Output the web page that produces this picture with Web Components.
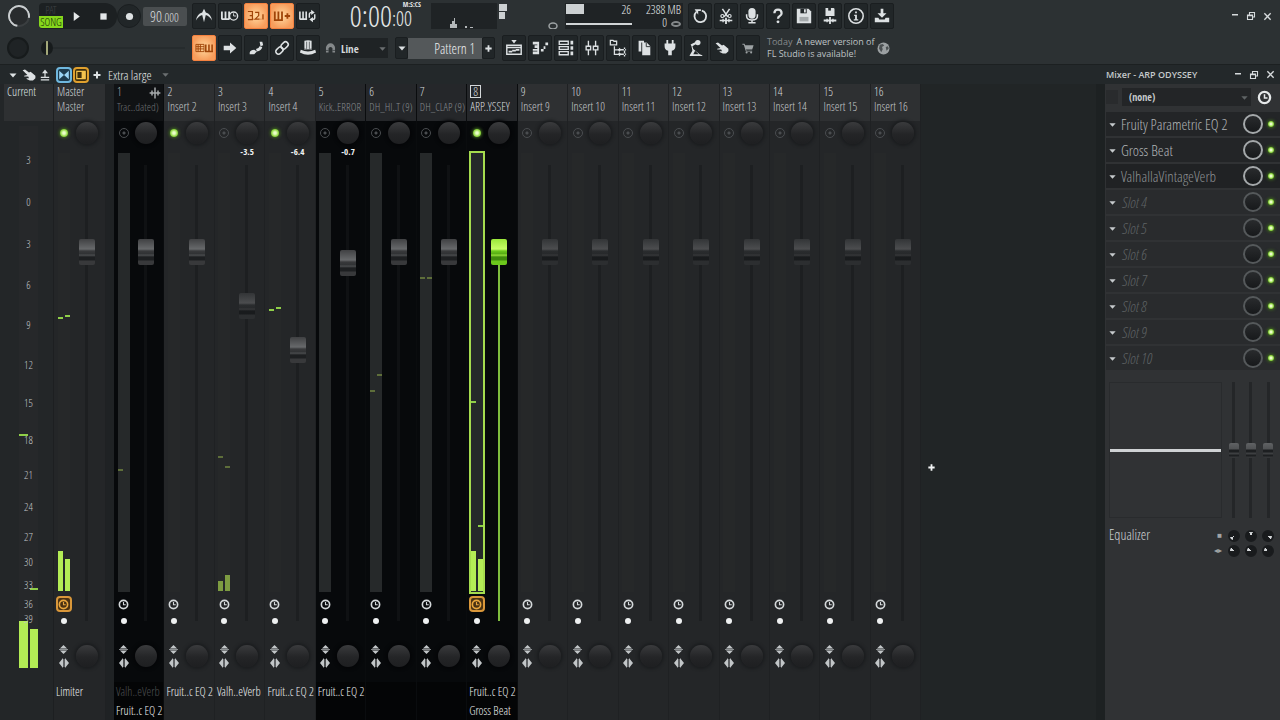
<!DOCTYPE html>
<html lang="en">
<head>
<meta charset="utf-8">
<title>Mixer - ARP ODYSSEY</title>
<style>
  html, body { margin: 0; height: 100%; }
  body { background: #222628; color: #d8dcde; font-family: "Open Sans Condensed Light", "Open Sans Condensed", "Liberation Sans Narrow", Lato, sans-serif; font-size: 12px; overflow: hidden; }
</style>
</head>
<body>
<daw-app></daw-app>
<script>
const ICONS = {
  metronome: '<path d="M1 15c1-5 3-8 7-9l2-4 2 4c4 1 6 4 7 9-2-3-4-5-7-6l-2 8-2-8c-3 1-5 3-7 6z"/>',
  waitkey: '<path d="M1 5v9M5 5v9M9 5v9M1 13.500h8" fill="none" stroke="currentColor" stroke-width="2"/><circle cx="14" cy="10" r="4.500" fill="none" stroke="currentColor" stroke-width="1.500"/><path d="M14 7v3h3" fill="none" stroke="currentColor"/>',
  countin: '<path d="M1 5h5v4.500H3M6 9.500V14H1M9 6h4v3.500l-4 4h5" fill="none" stroke="currentColor" stroke-width="1.300"/><path d="M17 8h1.500v6H17zM7 13h1v1H7zM15 13h1v1h-1z"/>',
  stepadd: '<path d="M2 5v10M6 5v10M10 5v10M1 14.500h10M13 10h6M16 7v6" fill="none" stroke="currentColor" stroke-width="2"/>',
  looprec: '<path d="M1 5v9M4.500 5v9M8 5v9M1 13.500h8" fill="none" stroke="currentColor" stroke-width="1.800"/><path d="M11.500 12V8q0-2 3-2M17.500 8v4q0 2-3 2" fill="none" stroke="currentColor" stroke-width="1.600"/><path d="M13.500 3l4 3-4 3zM15.500 11l-4 3 4 3z"/>',
  typing: '<path d="M1 6h9v8H1zM1 8.500h9M1 11h9M3.500 6v8M6 6v8" fill="none" stroke="currentColor"/><path d="M12 6v8M15.500 6v8M19 6v8M11 14h9" fill="none" stroke="currentColor" stroke-width="1.700"/>',
  arrow: '<path d="M3 7.500h7V4l7 6-7 6v-3.500H3z"/>',
  slide: '<path d="M3 15q1-3 5-3l3 2-3 3H3zM10 11q3 0 4-3l3 1q-1 4-6 5zM14 3h3l1 4-3 1z"/>',
  link: '<g fill="none" stroke="currentColor" stroke-width="1.700" transform="rotate(-45 10 10)"><rect x="1.500" y="7" width="9" height="6" rx="3"/><rect x="9.500" y="7" width="9" height="6" rx="3"/></g>',
  hat: '<path d="M6 2q4-1 8 0v10H6z"/><path d="M2 12q8 4 16 0l1 3q-9 5-18 0z"/><path d="M6 11q4 2 8 0M8.500 3v8M11.500 3v8" fill="none" stroke="#23282a" stroke-width="0.700"/>',
  magnet: '<path d="M3 16V9a7 7 0 0 1 14 0v7h-4V9.500q-3-4-6 0V16z"/><path d="M3 13h4M13 13h4" stroke="#2a2f31"/>',
  playlist: '<path d="M2 7h16v10H2zM2 9.500h16" fill="none" stroke="currentColor" stroke-width="1.600"/><path d="M7 1h6l-3 4zM4 13h4v2H4zM8 12h4v2H8zM12 11h4v2h-4z"/>',
  pianoroll: '<path d="M2 3h6v3H2zM4 7h5v3H4zM2 11h6v2H2zM2 14h6v3H2zM7 3h2v14H7zM11 11h3v3h-3zM14 8h2v3h-2zM16 4h3v3h-3z"/>',
  rack: '<path d="M2.500 2.500h10v3.500h-10zM2.500 8.500h10v3h-10zM2.500 14h10v3.500h-10z" fill="none" stroke="currentColor" stroke-width="1.500"/><path d="M15 2h3v4h-3zM15 8h3v4h-3zM15 14h3v4h-3z"/>',
  mixer: '<path d="M6 2v16M14 2v16" stroke="currentColor" stroke-width="1.500"/><path d="M3.500 8h5v4h-5zM11.500 8h5v4h-5z" fill="#23282a" stroke="currentColor" stroke-width="1.500"/>',
  browser: '<path d="M1.500 1.500h3l1 1h3v4h-7zM6 8v9h5M6 12h5" fill="none" stroke="currentColor" stroke-width="1.400"/><path d="M10 11.200h9v1.500h-9zM10 16.200h9v1.500h-9zM11 9.500l3 2.500-3 2.500zM18 9.500h-1.500v5H18zM11 14.500l3 2.500-3 2.500zM18 14.500h-1.500v5H18z"/>',
  copy: '<path d="M4 2h6v2H7v10H4zM8 4h5l4 4v10H8z"/><path d="M12.500 4v4.500H17" fill="none" stroke="#23282a"/>',
  plug: '<path d="M6 1h2v4h4V1h2v4h2v3q0 4-4 5v5H8v-5q-4-1-4-5V5h2z"/>',
  touch: '<circle cx="12" cy="4" r="3"/><path d="M10 3L4 6l1 2 1 5-3 5v1h14v-1l-3-1-7-6-1-3 5-3zM9 13l4 4H7z" fill-rule="evenodd"/>',
  hand: '<path d="M2 4l3-1 5 4 2-1 6 5v3l-3 3h-4l-4-2v-1h3l-1-2-5 0v-1l4-1z"/>',
  cart: '<path d="M2 4h3l1 2h12l-2 6H7l1 2h8v1H7L4 5.500H2z"/><circle cx="8" cy="16.500" r="1.500"/><circle cx="14.500" cy="16.500" r="1.500"/>',
  undo: '<path d="M6 5.500a6.500 6.500 0 1 0 6-1.500" fill="none" stroke="currentColor" stroke-width="2"/><path d="M4 2.500h7v2H8v4z"/>',
  cut: '<path d="M6 2l6 9M14 2l-6 9M3 15h14" fill="none" stroke="currentColor" stroke-width="1.700"/><circle cx="6" cy="10" r="1.700" fill="none" stroke="currentColor" stroke-width="1.300"/><circle cx="14" cy="10" r="1.700" fill="none" stroke="currentColor" stroke-width="1.300"/><path d="M9 12h2v7H9zM6 13h1.500v4H6zM12.500 13H14v4h-1.500z"/>',
  mic: '<rect x="6" y="1" width="8" height="12" rx="4"/><path d="M4 8v2q0 4.500 6 4.500t6-4.500V8M10 14v3M6 17.500h8" fill="none" stroke="currentColor" stroke-width="1.700"/>',
  help: '<path d="M6 7q0-4 4-4t4 4q0 2-2 3t-2 3" fill="none" stroke="currentColor" stroke-width="2.500"/><circle cx="10" cy="16.500" r="1.600"/>',
  save: '<path d="M2 2h13l3 3v13H2z"/><path d="M6 2h7v5H6z" fill="#23282a"/><path d="M10 2.500h2v3.500h-2z"/><path d="M5 11h10v5H5z" fill="#a5aaac"/>',
  savenew: '<path d="M5 1h9l1 1v8H5z"/><path d="M8 1h3v3H8z" fill="#23282a"/><path d="M3 14h14v2H3zM9 11h2v8H9zM6 13h1.500v4H6zM12.500 13H14v4h-1.500z"/>',
  info: '<circle cx="10" cy="10" r="8" fill="none" stroke="currentColor" stroke-width="1.700"/><path d="M8 8.500h3v5h1.500V15h-5v-1.500H9V10H8zM9 5h2v2H9z"/>',
  export: '<path d="M8.500 2h3v5H15l-5 5-5-5h3.500zM2 12h4l1 2h6l1-2h4v5H2z"/>',
  globe: '<circle cx="10" cy="10" r="8" fill="#9ba0a2"/><path d="M5 5l4-1 2 2-3 2 1 3-2 4-3-5zM13 8l3-1 1 3-3 3z" fill="#4a4f51"/>',
  clock: '<circle cx="10" cy="10" r="7.500" fill="none" stroke="currentColor" stroke-width="3"/><path d="M10 5.500v5h4" fill="none" stroke="currentColor" stroke-width="2"/>',
  down: '<path d="M3 7h14l-7 8z"/>',
  plus: '<path d="M8 3h4v5h5v4h-5v5H8v-5H3V8h5z"/>',
  sendup: '<path d="M10 1l5 6h-4v6h6v2H3v-2h6V7H5zM3 17h14v2H3z"/>',
  wave: '<path d="M1 10h18M5 6v8M10 1v18M15 6v8" stroke="currentColor" stroke-width="2.500"/>',
  bowtie: '<path d="M2 3l8 7-8 7zM18 3l-8 7 8 7z"/>',
  panel: '<path d="M3 4h14v12H3z" fill="none" stroke="currentColor" stroke-width="2"/><path d="M11 4h6v12h-6z"/>',
  phase: '<path d="M10 0l8 8H2zM2 12h16l-8 8z"/><path d="M0 10h20" stroke="currentColor" stroke-width="1.500"/>',
  swap: '<path d="M8 0v20L0 10zM12 0v20l8-10z"/><path d="M10 2v16" stroke="currentColor" stroke-width="1.500"/>',
  minimize: '<path d="M4 6h12v3H4z"/>',
  restore: '<path d="M7 7V3h10v9h-4M3 8h10v9H3z" fill="none" stroke="currentColor" stroke-width="2.200"/><path d="M3 8h10v2.500H3z"/>',
  close: '<path d="M3 3l14 14M17 3L3 17" stroke="currentColor" stroke-width="3"/>',
  play: '<path d="M5 2l11 8-11 8z"/>',
  stop: '<path d="M3 3h14v14H3z"/>',
  record: '<circle cx="10" cy="10" r="8"/>'
};
const icon = (name, size = 18) => `<svg class="icon" width="${size}" height="${size}" viewBox="0 0 20 20" fill="currentColor" aria-hidden="true">${ICONS[name]}</svg>`;
const RESET = `
  *, *::before, *::after { box-sizing: border-box; }
  button, select, input { font: inherit; color: inherit; margin: 0; padding: 0; border: 0; background: none; appearance: none; outline: none; }
  button { display: grid; place-items: center; }
  svg { display: block; }
`;
class Base extends HTMLElement {
  connectedCallback() {
    if (this.shadowRoot) return;
    this.attachShadow({ mode: 'open' }).innerHTML = `<style>${RESET}${this.css()}</style>${this.html()}`;
  }
  attr(name, fallback = '') { return this.getAttribute(name) ?? fallback; }
}

customElements.define('tool-button', class extends Base {
  css() { return `
    :host { display: block; flex: none; width: 24px; }
    button { width: 100%; height: 26px; background: #212628; color: #dde1e3; border: 1px solid #1a1e20; border-radius: 2px; }
    :host([active]) button { background: radial-gradient(#ffd9a0, #f79d5c 75%); border-color: #f4813f; color: #a04408; }
    :host([plain]) button { background: none; border-color: transparent; }
    :host([round]) button { border-radius: 50%; height: 24px; }
    :host([dim]) button { color: #9da2a4; }
    :host([tiny]) { width: 16px; }
    :host([tiny]) button { height: 20px; background: none; border: 0; }
    :host([narrow]) { width: 13px; }
    :host([narrow]) button { height: 22px; }
  `; }
  html() { return `<button type="button" aria-label="${this.attr('icon')}">${icon(this.attr('icon'), this.attr('size', 18))}</button>`; }
});

customElements.define('rotary-knob', class extends Base {
  css() { return `
    :host { display: block; flex: none; width: 22px; height: 22px; }
    input { display: block; width: 100%; height: 100%; border-radius: 50%; background: linear-gradient(#3a3b3d, #242527 55%, #1e1f21); box-shadow: 0 0 3px 2px var(--halo, #1b1d1f); }
    input::-webkit-slider-thumb { appearance: none; width: 0; height: 0; }
    :host([kind="slot"]) { width: 20px; height: 20px; }
    :host([kind="slot"]) input { border: 2px solid #55595b; background: linear-gradient(#292b2d, #17191b); box-shadow: none; }
    :host([kind="slot"][on]) input { border-color: #a4a8aa; }
    :host([kind="mini"]) { width: 12px; height: 12px; }
    :host([kind="mini"]) input { border: 2px solid #191b1d; background: conic-gradient(from calc(var(--turn, 0deg) - 25deg), #d5d8da 50deg, #191b1d 50deg); box-shadow: none; }
    :host([kind="volume"]) input { border: 2px solid #c9cdcf; border-bottom-color: #3a3e40; background: #282b2d; box-shadow: none; transform: rotate(-35deg); }
    :host([kind="pitch"]) input { background: #1f2325; border: 2px solid #171b1c; box-shadow: none; }
  `; }
  html() { return `<input type="range" aria-label="${this.attr('label', 'Knob')}">`; }
});

customElements.define('led-toggle', class extends Base {
  css() { return `
    :host { display: grid; place-items: center; flex: none; width: 12px; height: 12px; }
    input { display: block; width: 10px; height: 10px; border-radius: 50%; border: 1px solid #4a4d50; background: radial-gradient(#4a4d50 1px, transparent 2px); }
    input:checked { width: 8px; height: 8px; border: 0; background: radial-gradient(#eaffc8 20%, #8fd840 60%, #5b9a26); box-shadow: 0 0 3px 1px #3f6a1e; }
    :host([small]) input:checked { width: 6px; height: 6px; }
  `; }
  html() { return `<input type="checkbox" aria-label="${this.attr('label', 'Enable')}" ${this.hasAttribute('on') ? 'checked' : ''}>`; }
});

customElements.define('volume-fader', class extends Base {
  css() { return `
    :host { display: block; min-height: 0; }
    input { writing-mode: vertical-lr; direction: rtl; display: block; width: 100%; height: 100%;
      background: linear-gradient(90deg, transparent calc(50% - 2px), var(--groove, #1d1f21) calc(50% - 2px) calc(50% + 1px), transparent calc(50% + 1px)); }
    input::-webkit-slider-thumb { appearance: none; width: 16px; height: 26px; border-radius: 2px;
      background: linear-gradient(#404143 0, #67696b 10px, #38393b 12px, #303234 15px, #4d4f51 16px, #1d1f21 18px 21px, #38393b 22px 100%); }
    :host([kind="faint"]) input::-webkit-slider-thumb { background: linear-gradient(#333537 0, #4c4d4f 10px, #2a2c2e 12px, #27292b 15px, #38393b 16px, #191b1d 18px 21px, #2c2e30 22px 100%); }
    :host([kind="lit"]) input { background: linear-gradient(90deg, transparent calc(50% - 1px), #7fbd3e calc(50% - 1px) calc(50% + 1px), transparent calc(50% + 1px)) 0 100% / 100% 81% no-repeat; }
    :host([kind="lit"]) input::-webkit-slider-thumb { background: linear-gradient(#9be83a 0, #c8ff66 10px, #6cc81c 12px, #55aa14 15px, #9be63c 16px, #3f8a0c 18px 21px, #6cc81c 22px 100%); }
    :host([kind="small"]) input::-webkit-slider-thumb { width: 10px; height: 15px; background: linear-gradient(#606264 0, #505254 6px, #1d1f21 7px 9px, #3d3f41 10px 11px, #1d1f21 12px 13px, #343638 14px); }
  `; }
  html() { return `<input type="range" min="0" max="430" value="${this.attr('value', 356)}" aria-label="${this.attr('label', 'Volume')}">`; }
});

customElements.define('level-meter', class extends Base {
  css() { return `
    :host { display: block; position: relative; width: 12px; background: var(--meter, #26282a); }
    :host([selected]) { background: #25292a; box-shadow: 0 0 0 2px #a5dc4e; }
    .bar, .peak { position: absolute; width: calc(50% - 1px); background: #b3ec55; }
    .bar { bottom: 1px; }
    .peak { height: 2px; background: #8fcf48; }
    .l { left: 0; } .r { right: 0; }
    :host([muted]) .bar { background: #7d9c41; }
    :host([muted]) .peak, :host([faded]) .peak { background: #5e6e3a; }
  `; }
  html() {
    const side = ['l', 'r'];
    const bars = this.attr('bars').split(' ').filter(Boolean).map((v, i) => `<div class="bar ${side[i]}" style="height:${v}%"></div>`);
    const peaks = this.attr('peaks').split(' ').map((v, i) => v ? `<div class="peak ${side[i]}" style="top:${v}%"></div>` : '');
    return bars.join('') + peaks.join('');
  }
});

customElements.define('mixer-strip', class extends Base {
  css() { return `
    :host { display: flex; flex-direction: column; min-width: 0; min-height: 0; background: #242628; border-right: 1px solid #1f2123; --meter: #262829; }
    header { height: 37px; flex: none; padding-left: 3px; background: #2e3032; line-height: 15px; white-space: nowrap; color: #c2c6c8; }
    .no { display: flex; justify-content: space-between; padding-right: 2px; color: #d4d8da; }
    .no b { font-weight: normal; }
    .no svg { margin-top: 3px; }
    .name { display: block; }
    :host([tone="black"]) { background: #07090b; border-color: #0a0c0e; --meter: #26292a; --groove: #0f1113; --halo: #050608; }
    :host([tone="black"]) .name { color: #84888a; font-size: 11px; }
    :host([tone="black"]) header { background: #25272a; }
    :host([tone="black"][bright]) .name { color: #d8dcde; font-size: 12px; }
    :host([number="1"]) header { background: #101214; }
    :host([number="1"]) .no { color: #a5a9ab; }
    :host([number="1"]) .name { color: #6b6e70; }
    :host([boxed]) .no b { border: 1px solid #d4d8da; line-height: 11px; padding: 0 2px; margin: 1px 0 1px 0; }
    .body { flex: 1; min-height: 0; display: grid; grid-template: minmax(0, 1fr) / 19px 1fr; padding-right: 4px; }
    .left, .right { display: flex; flex-direction: column; align-items: center; min-height: 0; }
    .cell { height: 24px; flex: none; display: grid; place-items: center; }
    level-meter { flex: 1; margin-top: 8px; }
    .clock { width: 16px; height: 16px; border-radius: 4px; color: #d4d8da; }
    :host([latency]) .clock { border: 2px solid #d9973a; background: #4a3213; color: #e8a63e; }
    .dot { width: 6px; height: 6px; margin: 2px 0 18px; flex: none; border-radius: 50%; background: #eef0f1; }
    .flip { height: 14px; flex: none; color: #c2c6c8; }
    .left { padding-bottom: 12px; }
    output { height: 14px; line-height: 14px; flex: none; font-size: 9px; font-family: "Open Sans Condensed", sans-serif; font-weight: bold; color: #f0f2f3; margin-bottom: 6px; }
    volume-fader { flex: 1; width: 20px; }
    .right > rotary-knob { margin: 24px 0 15px; }
    ul { flex: none; height: 38px; margin: 0; padding: 0 0 0 2px; list-style: none; line-height: 19px; color: #eceff0; white-space: nowrap; background: #242628; }
    :host([tone="black"]) ul { background: #040506; }
    li.off { color: #4c4f51; }
  `; }
  html() {
    const fx = this.attr('fx').split('|').filter(Boolean);
    const name = this.attr('name');
    return `
      <header><span class="no"><b>${this.attr('number')}</b>${this.hasAttribute('wave') ? icon('wave', 12) : ''}</span><span class="name">${name}</span></header>
      <div class="body">
        <div class="left">
          <div class="cell"><led-toggle label="Mute ${name}" ${this.hasAttribute('on') ? 'on' : ''}></led-toggle></div>
          <level-meter bars="${this.attr('bars')}" peaks="${this.attr('peaks')}" ${this.hasAttribute('boxed') ? 'selected' : ''} ${this.attr('meter')}></level-meter>
          <div class="cell"><button class="clock" type="button" aria-label="Latency">${icon('clock', 11)}</button></div>
          <div class="dot"></div>
          <button class="flip" type="button" aria-label="Invert phase">${icon('phase', 9)}</button>
          <button class="flip" type="button" aria-label="Swap channels">${icon('swap', 10)}</button>
        </div>
        <div class="right">
          <div class="cell"><rotary-knob label="Pan"></rotary-knob></div>
          <output>${this.attr('gain')}</output>
          <volume-fader value="${this.attr('level', 356)}" kind="${this.attr('fader')}"></volume-fader>
          <rotary-knob label="Stereo separation"></rotary-knob>
        </div>
      </div>
      <ul>${fx.map(f => f[0] === '~' ? `<li class="off">${f.slice(1)}</li>` : `<li>${f}</li>`).join('')}</ul>`;
  }
});

customElements.define('current-strip', class extends Base {
  css() { return `
    :host { display: flex; flex-direction: column; min-height: 0; background: #232628; border-right: 1px solid #1d1f21; padding-left: 4px; }
    header { height: 37px; flex: none; padding-left: 3px; line-height: 15px; background: #2e3032; color: #dde0e2; }
    .scale { flex: 1; position: relative; display: flex; margin: 5px 0 51px 15px; min-height: 0; }
    level-meter { width: 19px; }
    ol { position: absolute; inset: 0 auto 0 0; width: 19px; margin: 0; padding: 0; list-style: none; display: flex; flex-direction: column; font-size: 11px; color: #c0c4c6; text-align: center; }
    li { min-height: 0; display: flex; justify-content: center; align-items: flex-end; line-height: 0; }
  `; }
  html() {
    const marks = [['3', 34], ['0', 42], ['3', 42], ['6', 41], ['9', 40], ['12', 40], ['15', 38], ['18', 37], ['21', 35], ['24', 32], ['27', 30], ['30', 25], ['33', 23], ['36', 19], ['39', 15]];
    return `<header>Current</header>
      <div class="scale"><level-meter bars="8.600 7.200" peaks="56.700 85.100"></level-meter>
      <ol>${marks.map(([t, n]) => `<li style="flex:${n} 1 0">${t}</li>`).join('')}<li style="flex:50 1 0"></li></ol></div>`;
  }
});

customElements.define('fx-slot', class extends Base {
  css() { return `
    :host { display: grid; grid-template-columns: 12px 1fr 20px 12px; column-gap: 2px; align-items: center; height: 24px; background: #292b2d; color: #5f6365; font-size: 15px; padding: 0 3px 0 1px; }
    :host([state="on"]) { color: #b0b4b6; background: #232527; }
    :host([state="off"]) { color: #8d9193; background: #202224; }
    .name { justify-content: start; text-align: left; white-space: nowrap; }
    :host(:not([state])) .name { font-style: italic; padding-left: 1px; }
    .arrow { color: #c6cacc; }
  `; }
  html() { return `<button class="arrow" type="button" aria-label="Slot menu">${icon('down', 9)}</button>
    <button class="name" type="button"><slot></slot></button>
    <rotary-knob kind="slot" label="Mix level" ${this.hasAttribute('state') ? 'on' : ''}></rotary-knob><led-toggle on small></led-toggle>`; }
});

customElements.define('equalizer-panel', class extends Base {
  css() { return `
    :host { display: grid; grid-template-columns: minmax(0, 1fr) 52px; column-gap: 3px; padding: 12px 3px 0; }
    .graph { height: 136px; border: 1px solid #292b2d; display: flex; align-items: center; }
    .graph i { width: 100%; height: 3px; background: #cfd2d4; }
    .bands { display: grid; grid-template: minmax(0, 1fr) / repeat(3, 1fr); height: 136px; }
    volume-fader { --groove: #242628; }
    .label { font-size: 14px; color: #d0d4d6; line-height: 15px; padding-top: 9px; display: flex; justify-content: space-between; }
    .marks { font-size: 8px; color: #a0a4a6; text-align: right; }
    .marks span { display: block; }
    .dials { display: grid; grid-template-columns: repeat(3, 1fr); grid-auto-rows: 15px; place-items: center; padding-top: 10px; }
  `; }
  html() {
    const turns = ['225deg', '0deg', '110deg', '290deg', '290deg', '290deg'];
    return `<div class="graph"><i></i></div>
      <div class="bands">${'<volume-fader kind="small" value="215" label="Band level"></volume-fader>'.repeat(3)}</div>
      <div class="label">Equalizer<div class="marks"><span>■</span><span>◂▸</span></div></div>
      <div class="dials">${turns.map(t => `<rotary-knob kind="mini" label="Band" style="--turn:${t}"></rotary-knob>`).join('')}</div>`;
  }
});

customElements.define('effects-panel', class extends Base {
  css() { return `
    :host { display: block; background: #303234; border-left: 9px solid #1d2122; padding: 1px 0 0 1px; }
    .preset { display: grid; grid-template-columns: 12px 1fr 20px; column-gap: 4px; align-items: center; height: 24px; margin-bottom: 3px; padding-right: 5px; }
    .box { height: 14px; background: #292b2d; }
    .pick { position: relative; display: flex; align-items: center; background: #232527; height: 18px; }
    select { width: 100%; height: 18px; padding-left: 7px; color: #c6cacc; font-family: "Open Sans Condensed", sans-serif; font-weight: bold; font-size: 10px; }
    .pick svg { position: absolute; right: 2px; color: #5f6365; pointer-events: none; }
    .clock { color: #e6e9ea; }
    .slots { display: grid; row-gap: 2px; }
  `; }
  html() {
    const slots = [['Fruity Parametric EQ 2', 'on'], ['Gross Beat', 'on'], ['ValhallaVintageVerb', 'off']];
    for (let n = 4; n <= 10; n++) slots.push([`Slot ${n}`, '']);
    return `<div class="preset"><div class="box"></div>
      <div class="pick"><select aria-label="Input"><option>(none)</option></select>${icon('down', 9)}</div>
      <button class="clock" type="button" aria-label="Latency">${icon('clock', 15)}</button></div>
      <div class="slots">${slots.map(([t, s]) => `<fx-slot ${s ? `state="${s}"` : ''}>${t}</fx-slot>`).join('')}</div>
      <equalizer-panel></equalizer-panel>`;
  }
});

customElements.define('window-controls', class extends Base {
  css() { return `
    :host { display: flex; color: #d6dadc; }
    button { width: 16px; height: 20px; }
  `; }
  html() { return `<button type="button" aria-label="Minimize">${icon('minimize', 10)}</button><button type="button" aria-label="Restore">${icon('restore', 10)}</button><button type="button" aria-label="Close">${icon('close', 9)}</button>`; }
});

customElements.define('transport-bar', class extends Base {
  css() { return `
    :host { display: flex; align-items: center; height: 32px; padding: 0 5px 0 8px; }
    .pill { display: flex; align-items: center; width: 78px; height: 26px; margin-left: 9px; background: #1c2022; border-radius: 4px 12px 12px 4px; flex: none; }
    .mode { width: 24px; height: 24px; display: grid; grid-template-rows: 12px 12px; font-size: 11px; line-height: 12px; text-align: center; color: #3c4143; }
    .mode b { background: #86d71c; color: #14270a; font-weight: normal; border-radius: 0 0 0 3px; display: block; width: 24px; }
    .pill button:not(.mode) { flex: 1; height: 24px; color: #e4e7e8; }
    .tempo { width: 44px; height: 19px; margin: 0 5px 0 2px; background: #4a4e50; color: #d8dcde; border-radius: 2px; font-size: 15px; line-height: 19px; padding-left: 7px; display: flex; align-items: baseline; flex: none; }
    .tempo small { font-size: 12px; }
    .group { display: flex; gap: 2px; flex: none; }
    .time { width: 97px; margin: 0 10px 0 4px; color: #e4e7e8; display: grid; grid-template-columns: 1fr 29px; flex: none; height: 30px; }
    .time b { font-weight: normal; font-size: 30px; line-height: 30px; text-align: right; }
    .time div { display: grid; grid-template-rows: 8px 22px; }
    .time small { font-size: 20px; line-height: 20px; }
    .time sup { font-family: "Open Sans Condensed", sans-serif; font-weight: bold; font-size: 7px; line-height: 8px; vertical-align: baseline; text-align: right; }
    .scope { flex: none; width: 66px; height: 26px; background: #1f2325; color: #b4b8ba; }
    .midi { flex: none; width: 62px; height: 26px; color: #ccd0d2; }
    .cpu { flex: none; width: 118px; height: 26px; background: #1f2325; margin: 0 5px 0 6px; display: grid; grid-template-columns: 66px 1fr; color: #e8ebec; line-height: 13px; text-align: right; padding-right: 2px; font-size: 12px; }
    .load { display: grid; grid-template-rows: 19px 2px; }
    .load div { display: flex; justify-content: space-between; padding-left: 1px; }
    .load div i { width: 18px; height: 10px; margin-top: 1px; background: #ccd0d2; }
    .load hr { width: 100%; height: 2px; margin: 1px 0 0 1px; border: 0; background: #d0d4d6; }
    .mem span { display: block; }
    .mem i { display: inline-block; width: 10px; height: 6px; border: 2px solid #84888a; border-radius: 50%; margin-left: 4px; }
    window-controls { margin-left: auto; }
  `; }
  html() {
    const group = (names, active = []) => `<div class="group">${names.map(n => `<tool-button icon="${n}" ${active.includes(n) ? 'active' : ''}></tool-button>`).join('')}</div>`;
    return `<rotary-knob kind="volume" label="Main volume"></rotary-knob>
      <div class="pill"><button class="mode" type="button" aria-label="Pattern or song mode">PAT<b>SONG</b></button><button type="button" aria-label="Play">${icon('play', 11)}</button><button type="button" aria-label="Stop">${icon('stop', 9)}</button></div>
      <tool-button icon="record" size="9" round></tool-button>
      <button class="tempo" type="button" aria-label="Tempo">90<small>.000</small></button>
      ${group(['metronome', 'waitkey', 'countin', 'stepadd', 'looprec'], ['countin', 'stepadd'])}
      <div class="time"><b>0:00</b><div><sup>M:S:CS</sup><small>:00</small></div></div>
      <svg class="scope" viewBox="0 0 66 26" fill="currentColor"><path d="M19 25v-4h2v-3h2v-3h1v6h2v4zM34 25v-2h2v2zM39 25v-1h3v1z"/></svg>
      <svg class="midi" viewBox="0 0 62 26"><path fill="currentColor" d="M2 1h8v7H2zM2 9h6v7H2z"/><ellipse cx="56" cy="23" rx="4" ry="3" fill="none" stroke="#9da2a4" stroke-width="1.500"/></svg>
      <div class="cpu"><div class="load"><div><i></i><span>26</span></div><hr></div><div class="mem"><span>2388 MB</span><span>0<i></i></span></div></div>
      ${group(['undo', 'cut', 'mic', 'help', 'save', 'savenew', 'info', 'export'])}
      <window-controls></window-controls>`;
  }
});

customElements.define('tools-bar', class extends Base {
  css() { return `
    :host { display: flex; align-items: center; height: 32px; padding: 0 5px 0 7px; }
    .seek { width: 144px; height: 14px; margin: 0 7px 0 12px; flex: none; background: linear-gradient(transparent 6px, #262b2d 6px 8px, transparent 8px); }
    .seek::-webkit-slider-thumb { appearance: none; width: 12px; height: 14px; border-radius: 50%; background: linear-gradient(90deg, #171b1c 5px, #a3a87a 5px 7px, #171b1c 7px); }
    .group { display: flex; gap: 2px; flex: none; }
    .snap { position: relative; width: 48px; height: 20px; margin: 0 7px 0 0; background: #1f2325; display: flex; align-items: center; flex: none; }
    .snap select { width: 100%; height: 20px; padding-left: 1px; font-family: "Open Sans Condensed", sans-serif; font-weight: bold; font-size: 11px; color: #d4d8da; }
    .snap svg { position: absolute; right: 1px; color: #6b6f71; pointer-events: none; }
    .pattern { flex: none; width: 74px; height: 21px; margin: 0; background: #54585a; color: #eceff0; font-size: 14px; justify-content: end; padding-right: 7px; white-space: nowrap; }
    .group.main { margin-left: 7px; }
    .magnet { width: 20px; color: #85898b; }
    p { margin: 0 0 0 7px; width: 104px; line-height: 12px; color: #bfc3c5; white-space: nowrap; font-family: "Open Sans", sans-serif; font-size: 9px; }
    p i { font-style: normal; color: #85898b; margin-right: 4px; }
  `; }
  html() {
    const btn = (n, extra = '') => `<tool-button icon="${n}" ${extra}></tool-button>`;
    return `<rotary-knob kind="pitch" label="Main pitch"></rotary-knob>
      <input class="seek" type="range" value="0" aria-label="Song position">
      <div class="group">${btn('typing', 'active')}${['arrow', 'slide', 'link', 'hat'].map(n => btn(n)).join('')}</div>
      <button class="magnet" type="button" aria-label="Snap">${icon('magnet', 13)}</button>
      <div class="snap"><select aria-label="Snap to grid"><option>Line</option></select>${icon('down', 9)}</div>
      ${btn('down', 'narrow size="10"')}<button class="pattern" type="button">Pattern 1</button>${btn('plus', 'narrow size="9"')}
      <div class="group main">${['playlist', 'pianoroll', 'rack', 'mixer', 'browser', 'copy', 'plug', 'touch'].map(n => btn(n)).join('')}${btn('hand', 'size="16"')}${btn('cart', 'dim size="14"')}</div>
      <p><i>Today</i>A newer version of<br>FL Studio is available!</p>
      ${btn('globe', 'plain size="15"')}`;
  }
});

customElements.define('mixer-titlebar', class extends Base {
  css() { return `
    :host { display: flex; align-items: center; height: 20px; padding: 0 2px 0 5px; background: #23282a; border-top: 1px solid #1c2021; color: #e4e7e8; }
    .frame { width: 16px; height: 16px; flex: none; border: 2px solid #6fb7de; border-radius: 4px; color: #9ad4f4; background: #1d3a4c; margin-left: 1px; }
    .frame:first-of-type { margin-left: 3px; }
    .frame.amber { border-color: #e0a02e; color: #f5c34e; background: #3f2e0c; }
    select { width: 53px; margin-left: 3px; font-size: 13px; }
    .more { color: #6b6f71; }
    .title { margin-left: auto; width: 124px; font-family: "Open Sans", sans-serif; font-size: 9px; font-weight: 600; white-space: nowrap; color: #c6cacc; }
  `; }
  html() { return `<tool-button icon="down" tiny size="10"></tool-button><tool-button icon="hand" tiny size="16"></tool-button><tool-button icon="sendup" tiny size="12"></tool-button>
    <button class="frame" type="button" aria-label="Compact view">${icon('bowtie', 12)}</button><button class="frame amber" type="button" aria-label="Dock panel">${icon('panel', 12)}</button>
    <tool-button icon="plus" tiny size="10"></tool-button>
    <select aria-label="Strip size"><option>Extra large</option></select><span class="more">${icon('down', 9)}</span>
    <span class="title">Mixer - ARP ODYSSEY</span><window-controls></window-controls>`; }
});

customElements.define('daw-app', class extends Base {
  css() { return `
    :host { display: flex; flex-direction: column; height: 100vh; position: relative; }
    .top { background: #2c3133; }
    main { flex: 1; min-height: 0; display: grid; grid-template: minmax(0, 1fr) / 54px 52px 8px minmax(0, 37fr) minmax(0, 8fr) 184px; }
    .gap { background: #1f2224; }
    .tracks { display: grid; min-height: 0; grid-template: minmax(0, 1fr) / repeat(16, minmax(0, 1fr)); }
    .empty { position: relative; background: #212526; }
    .cursor { position: absolute; left: 6px; top: 379px; color: #f2f4f5; }
  `; }
  html() {
    const dim = 'tone="black"';
    const strips = [
      `number="1" name="Trac..dated)" ${dim} wave fx="~Valh..eVerb|Fruit..c EQ 2" peaks="72" meter="faded"`,
      `number="2" name="Insert 2" on fx="Fruit..c EQ 2"`,
      `number="3" name="Insert 3" gain="-3.5" level="302" fader="faint" fx="Valh..eVerb" bars="2.300 3.700" peaks="69 71.400" meter="muted"`,
      `number="4" name="Insert 4" on gain="-6.4" level="258" fx="Fruit..c EQ 2" peaks="35.500 35"`,
      `number="5" name="Kick..ERROR" ${dim} gain="-0.7" level="345" fx="Fruit..c EQ 2"`,
      `number="6" name="DH_HI..T (9)" ${dim} peaks="54 50.400" meter="faded"`,
      `number="7" name="DH_CLAP (9)" ${dim} peaks="28.300 28.300" meter="faded"`,
      `number="8" name="ARP..YSSEY" ${dim} bright boxed latency on fader="lit" bars="9.100 7.300" peaks="56.500 84.800" fx="Fruit..c EQ 2|Gross Beat"`
    ];
    for (let n = 9; n <= 16; n++) strips.push(`number="${n}" name="Insert ${n}" fader="faint"`);
    return `<div class="top"><transport-bar></transport-bar><tools-bar></tools-bar></div>
      <mixer-titlebar></mixer-titlebar>
      <main>
        <current-strip></current-strip>
        <mixer-strip number="Master" name="Master" on latency fx="Limiter" bars="9.100 7.300" peaks="37.300 36.900"></mixer-strip>
        <div class="gap"></div>
        <div class="tracks">${strips.map(s => `<mixer-strip ${s}></mixer-strip>`).join('')}</div>
        <div class="empty"><div class="cursor">${icon('plus', 9)}</div></div>
        <effects-panel></effects-panel>
      </main>`;
  }
});
</script>
</body>
</html>
